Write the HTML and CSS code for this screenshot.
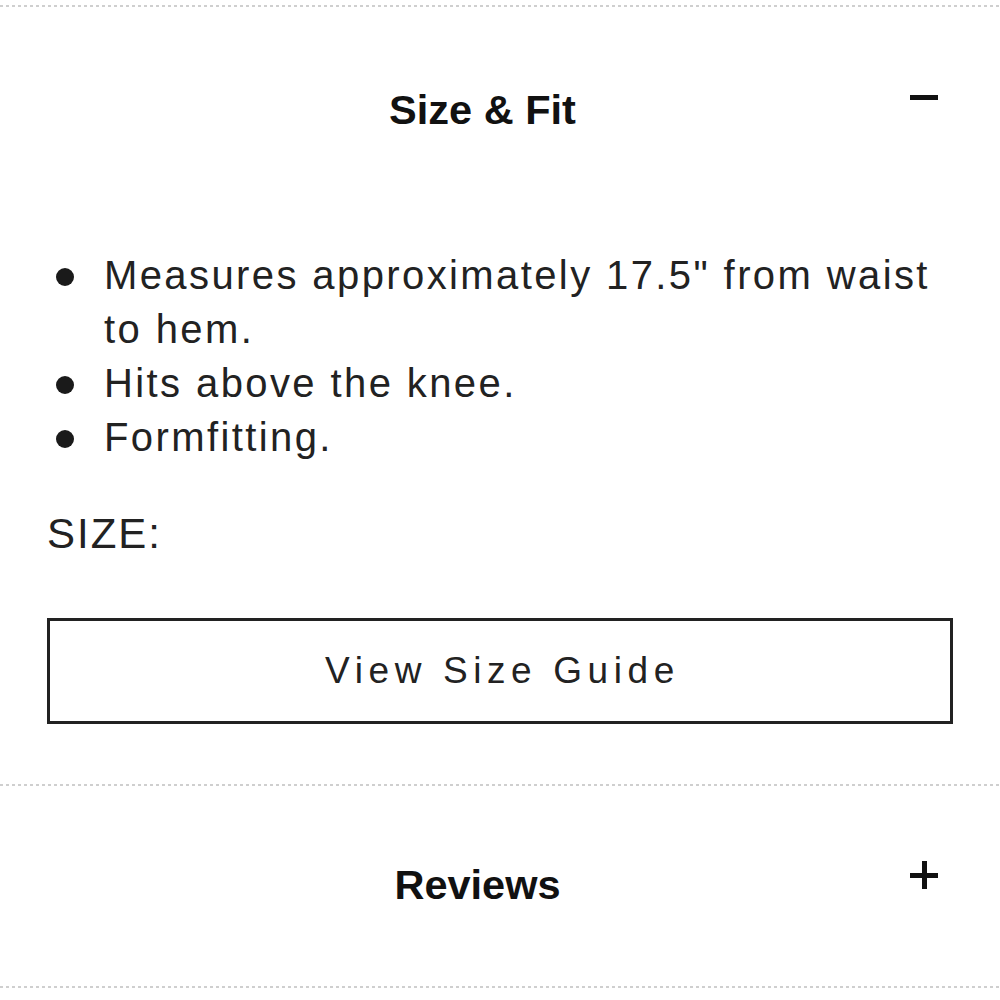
FILE: index.html
```html
<!DOCTYPE html>
<html>
<head>
<meta charset="utf-8">
<link rel="stylesheet" href="styles.css">
</head>
<body>
<div class="page">
  <div class="divider first"></div>
  <section class="panel">
    <div class="panel-head">
      <h2 class="panel-title">Size &amp; Fit</h2>
      <span class="icon icon-minus"></span>
    </div>
    <div class="panel-body">
      <ul class="bullets">
        <li>Measures approximately 17.5" from waist to hem.</li>
        <li>Hits above the knee.</li>
        <li>Formfitting.</li>
      </ul>
      <div class="size-label">SIZE:</div>
      <button class="guide-btn">View Size Guide</button>
    </div>
  </section>
  <div class="divider"></div>
  <section class="panel collapsed">
    <div class="panel-head">
      <h2 class="panel-title">Reviews</h2>
      <span class="icon icon-plus"></span>
    </div>
  </section>
  <div class="divider"></div>
</div>
</body>
</html>
```

FILE: styles.css
```css
* { box-sizing: border-box; }
html, body { margin: 0; padding: 0; background: #fff; }
body {
  font-family: "Liberation Sans", Arial, Helvetica, sans-serif;
  color: #222;
}
.page { display: flex; flex-direction: column; }
.divider {
  height: 2px;
  background-image: repeating-linear-gradient(to right, #cfcfcf 0 3px, transparent 3px 6px);
}
.divider.first { margin-top: 5px; }

.panel-head {
  display: flex;
  align-items: flex-start;
  padding: 80px 62px 0 55px;
}
.panel-title {
  flex: 1;
  margin: 0;
  text-align: center;
  font-size: 41.5px;
  line-height: 46px;
  font-weight: 700;
  color: #111;
}
.icon {
  position: relative;
  width: 28px;
  height: 28px;
}
.icon::before, .icon::after {
  content: "";
  position: absolute;
  background: #111;
}
.icon-minus { margin-top: -4px; }
.icon-minus::before { left: 0; right: 0; top: 12px; height: 5px; }
.icon-minus::after { display: none; }
.icon-plus { margin-top: -1px; }
.icon-plus::before { left: 0; right: 0; top: 12px; height: 5px; }
.icon-plus::after { top: 0; bottom: 0; left: 12px; width: 5px; }

.panel-body {
  padding: 115px 47px 60px 47px;
}
.bullets {
  list-style: none;
  margin: 0;
  padding: 0 0 0 57px;
  font-size: 40px;
  line-height: 54px;
  letter-spacing: 2.4px;
}
.bullets li { position: relative; }
.bullets li::before {
  content: "";
  position: absolute;
  left: -48px;
  top: 20px;
  width: 18px;
  height: 18px;
  border-radius: 50%;
  background: #1a1a1a;
}
.size-label {
  margin-top: 46px;
  font-size: 42px;
  line-height: 48px;
  letter-spacing: 2px;
}
.guide-btn {
  display: block;
  width: 100%;
  height: 106px;
  margin-top: 60px;
  border: 3px solid #222;
  background: #fff;
  font-family: "Liberation Sans", Arial, Helvetica, sans-serif;
  font-size: 37px;
  letter-spacing: 5.6px;
  color: #222;
  padding: 0 0 0 5px;
}
.panel.collapsed .panel-head { padding-top: 76px; padding-bottom: 78px; padding-left: 45px; }
```
